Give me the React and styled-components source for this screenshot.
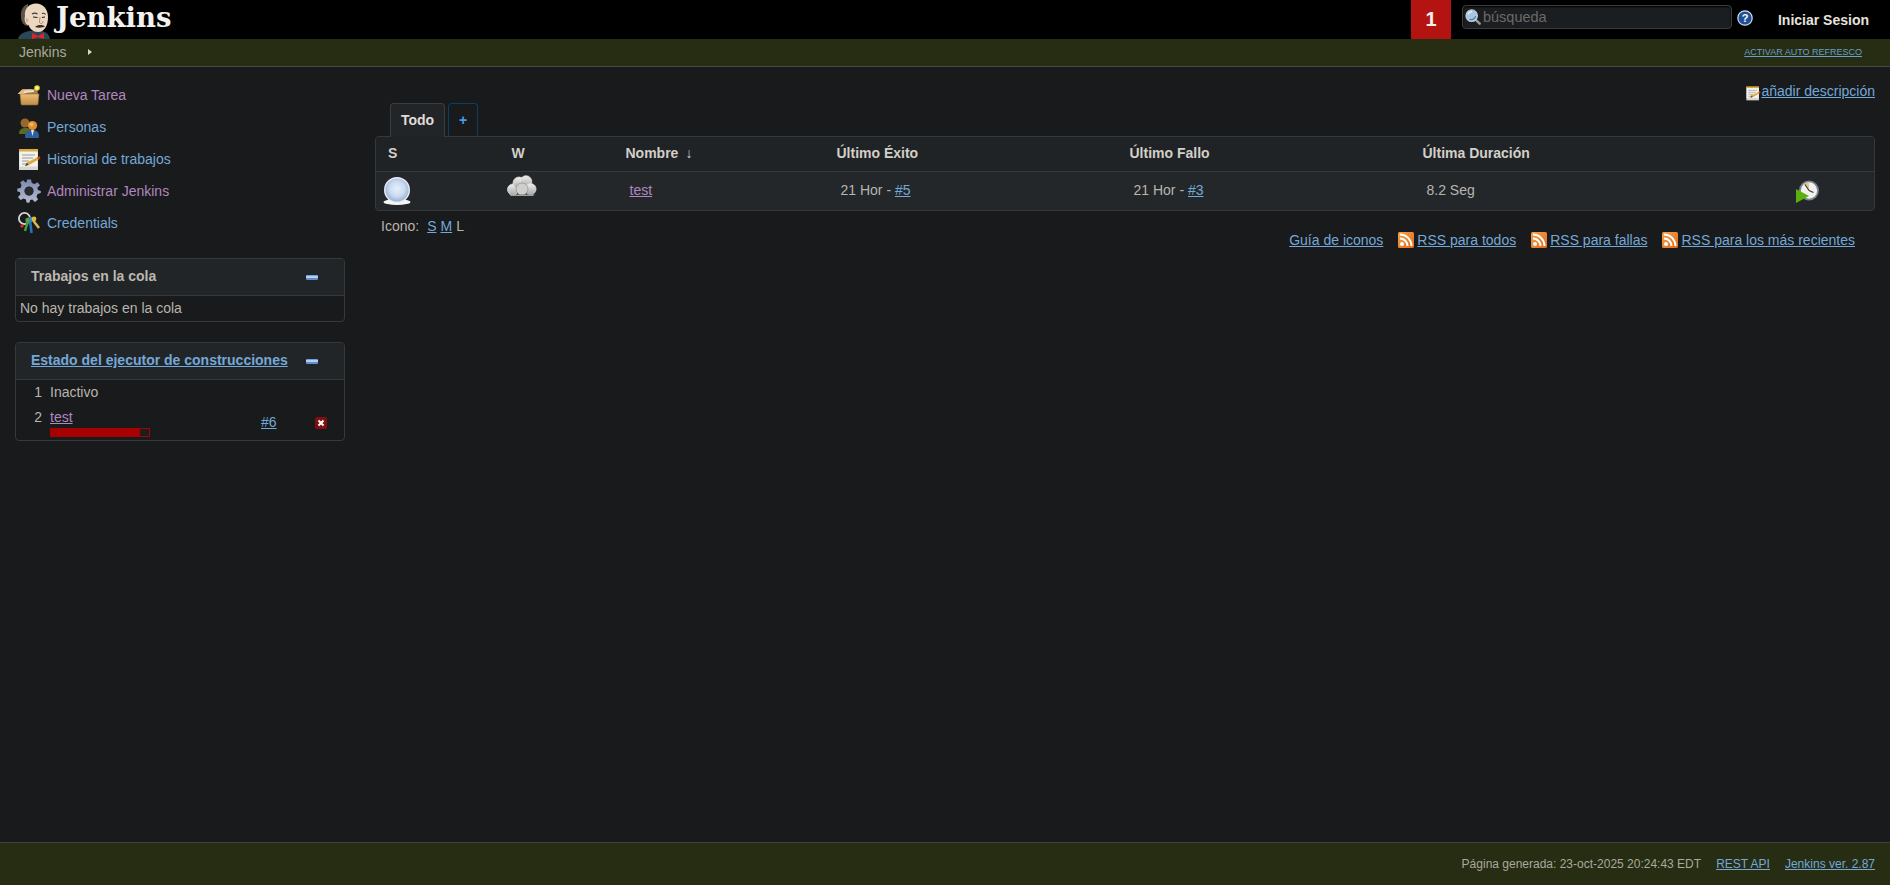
import React from "react";
import styled, { createGlobalStyle } from "styled-components";

const Global = createGlobalStyle`
  html, body { margin: 0; padding: 0; height: 100%; overflow: hidden; background: #181a1b; }
  body { font-family: "Liberation Sans", Arial, sans-serif; font-size: 14px; color: #b8b5ae; }
  #root { height: 100%; }
`;

const Page = styled.div`display: flex; flex-direction: column; height: 885px;`;
const A = styled.a`
  color: ${p => (p.$visited ? "#b088bf" : "#74a8d8")};
  text-decoration: underline;
  cursor: pointer;
`;
const Glyph = styled.svg`display: block; flex: none;`;

const TopBar = styled.header`display: flex; align-items: stretch; height: 39px; background: #000;`;
const Logo = styled.div`display: flex; align-items: flex-end; padding-left: 18px; flex: 1; overflow: hidden;`;
const LogoText = styled.span`
  font-family: "DejaVu Serif", serif; font-weight: 700; font-size: 27.5px; line-height: 34px;
  color: #f4f2ee; margin: 0 0 0 6px; align-self: flex-start;
`;
const Counter = styled.div`
  width: 40px; background: #b31412; color: #f2f0ec; font-weight: 700; font-size: 20px;
  display: flex; align-items: center; justify-content: center; margin-right: 11px;
`;
const SearchBox = styled.div`
  width: 270px; height: 24px; box-sizing: border-box; margin-top: 5px; display: flex; align-items: center; gap: 2px;
  padding-left: 2px; background: #1b1e20; border: 1px solid #3a3e41; border-radius: 4px;
  color: #6b6a66; font-size: 14.5px; box-shadow: inset 0 1px 2px #000;
`;
const Help = styled.div`margin: 10px 0 0 5px; height: 16px;`;
const Login = styled.div`
  font-weight: 700; font-size: 14px; color: #e6e3de; margin: 0 21px 0 25px; line-height: 41px;
`;

const Crumbs = styled.nav`
  height: 28px; box-sizing: border-box; display: flex; align-items: center; background: #262d13;
  border-bottom: 1px solid #45494c; padding: 0 28px 1px 19px; color: #aba89f;
`;
const Caret = styled.span`
  width: 0; height: 0; border-left: 4px solid #d8d5cf; border-top: 3.5px solid transparent;
  border-bottom: 3.5px solid transparent; margin-left: 22px;
`;
const AutoRefresh = styled(A)`
  margin-left: auto; font-size: 9px; text-transform: uppercase; color: #6a9fc9;
`;

const Body = styled.div`flex: 1; display: flex; min-height: 0;`;
const Side = styled.aside`width: 360px; flex: none; box-sizing: border-box; padding: 12px 15px 0;`;
const Tasks = styled.div`display: flex; flex-direction: column; margin-bottom: 19px;`;
const Task = styled.div`height: 32px; display: flex; align-items: center; gap: 7px; padding-left: 2px;`;
const TaskLink = styled(A)`text-decoration: none;`;
const IconBox = styled.span`width: 23px; height: 24px; display: inline-flex; align-items: center; justify-content: center; flex: none;`;

const Pane = styled.section`
  width: 330px; box-sizing: border-box; border: 1px solid #36393c; border-radius: 4px; margin-bottom: 20px; overflow: hidden;
`;
const PaneHead = styled.div`
  height: 37px; box-sizing: border-box; display: flex; align-items: center; background: #222527;
  border-bottom: 1px solid #36393c; padding: 0 26px 2px 15px; font-weight: 700; color: #bdb8b0;
  justify-content: space-between;
`;
const Collapse = styled.span`
  width: 12px; height: 5px; background: linear-gradient(#6ea0dc 0 25%, #b4cff0 25% 65%, #5f8fc8 65%); border-radius: 1px; margin-top: 2px;
`;
const PaneBody = styled.div`padding: 3px 4px 0; height: 22px; line-height: 18px;`;
const Exec = styled.div`
  display: grid; grid-template-columns: 26px 219px 54px 12px; padding-top: 3px; height: 57px;
  grid-auto-rows: min-content;
`;
const ExecNum = styled.div`text-align: right; line-height: 18px; padding-top: ${p => p.$top || 0}px;`;
const ExecCell = styled.div`padding: ${p => p.$top || 0}px 0 0 8px; line-height: 18px;`;
const Progress = styled.div`
  width: 100px; height: 9px; box-sizing: border-box; border: 1px solid #a80000; background: #1b1d1f; margin-top: 2px;
`;
const ProgressFill = styled.div`height: 100%; background: #a80000;`;
const RunRef = styled.div`padding-top: 12px; line-height: 18px;`;
const Stop = styled.div`padding-top: 16px;`;

const Main = styled.main`flex: 1; min-width: 0; padding: 15px 15px 0 15px; box-sizing: border-box;`;
const DescRow = styled.div`display: flex; justify-content: flex-end; align-items: flex-start; height: 21px; line-height: 18px;`;
const DescIcon = styled.span`padding-top: 3px;`;
const Tabs = styled.div`display: flex; gap: 3px; padding-left: 15px; height: 33px;`;
const Tab = styled.div`
  box-sizing: border-box; height: 34px; display: flex; align-items: center; justify-content: center;
  border-radius: 4px 4px 0 0; font-weight: 700; position: relative; padding-bottom: 1px;
  ${p => p.$active
    ? "width: 55px; background: #212528; border: 1px solid #3a3e41; border-bottom: none; color: #e0ddd8; z-index: 1;"
    : "width: 30px; border: 1px solid #0c3f66; border-bottom: none; color: #4a9be8;"}
`;
const Table = styled.div`
  border: 1px solid #36393c; border-radius: 4px; background: #23272a; overflow: hidden;
`;
const Row = styled.div`
  display: grid; grid-template-columns: 123.5px 114px 211px 293px 293px 1fr;
  height: ${p => (p.$head ? "34px" : "38px")}; align-items: center;
  ${p => p.$head && "background: #1f2326; border-bottom: 1px solid #36393c; box-sizing: content-box; height: 34px; font-weight: 700; color: #d3cfc9;"}
`;
const HeadCell = styled.div`padding-left: 12px; padding-bottom: 2px;`;
const DataCell = styled.div`padding: 0 55px 2px 16px; display: flex; align-items: center; justify-content: space-between;`;
const ClockWrap = styled.span`padding-top: 2px;`;
const IconCell = styled.div`padding: 0 0 ${p => p.$bottom || 0}px ${p => p.$pad || 7}px; display: flex;`;
const SortArrow = styled.span`font-weight: 400; margin-left: 7px; font-size: 14px;`;
const IconSize = styled.div`padding: 6px 0 0 6px; line-height: 18px; height: 14px;`;
const IconSizeLinks = styled.span`margin-left: 8px; display: inline-flex; gap: 4px;`;
const Legend = styled.div`display: flex; justify-content: flex-end; align-items: center; gap: 15px; padding: 0 20px 0 0; height: 18px;`;
const LegendItem = styled.span`display: inline-flex; align-items: center; gap: 3px;`;

const Footer = styled.footer`
  height: 43px; box-sizing: border-box; background: #262d13; border-top: 1px solid #3d4245;
  display: flex; justify-content: flex-end; align-items: center; gap: 15px; padding: 0 15px 0 0; font-size: 12px; color: #aba89f;
`;

const JenkinsHead = () => (
  <Glyph width="32" height="36" viewBox="0 0 32 36">
    <path d="M0 36 C1 31 6 29 11 28 L24 28 C28 29 31 31 32 36 Z" fill="#2b4657" />
    <path d="M14 30 L20 33 L26 30 L26 36 L20 34 L14 36 Z" fill="#e0262c" />
    <path d="M3 14 C2 7 6 2 10 1 L10 23 C6 23 3 19 3 14 Z" fill="#5c544b" />
    <path d="M7 13 C6 6 11 0.5 18 0.5 C25 0.5 30 6 30 14 C30 22 27 29 20 29 C15 29 12 26 10.5 22 C7 22 6 16 7 13 Z" fill="#ecd7c0" />
    <path d="M7.5 16 C8.5 15 10 15 10.5 17 C10.5 19 9 20.5 8.5 19.5 Z" fill="#d8b095" />
    <path d="M14 11 C16 9.8 18 10 19.5 11 M24 10.5 C25.5 10 27 10.5 27.5 11.5" stroke="#3a3a3a" strokeWidth="1.1" fill="none" />
    <path d="M15 14 L19.5 14.5 M24 14.5 L27 14" stroke="#222" strokeWidth="1.2" />
    <path d="M22 14 C22 17 20.5 20 22.5 20.5 C24.5 21 25 19 25 18" stroke="#b08a70" fill="none" />
    <path d="M17 24 C20 21.5 24 21.5 27 23.5 C25 24.8 20 25 17 24 Z" fill="#3a2f28" />
  </Glyph>
);

const BoxIcon = () => (
  <Glyph width="24" height="24" viewBox="0 0 24 24">
    <defs><linearGradient id="bx" x1="0" y1="0" x2="0" y2="1"><stop offset="0" stopColor="#f0bd70" /><stop offset="1" stopColor="#c08c48" /></linearGradient></defs>
    <path d="M1 11 L6 6 L20 6 L21 11 Z" fill="#a67e4c" />
    <path d="M3 11 L22 11 L21 21 Q21 22 20 22 L5 22 Q4 22 4 21 Z" fill="url(#bx)" stroke="#8c6a3c" strokeWidth=".6" />
    <path d="M0.5 11 L5 6.5 L16 6 L7 11 Z" fill="#e0ba80" />
    <path d="M7 9 L17 8" stroke="#e8e2d6" strokeWidth="2" />
    <circle cx="20" cy="5" r="2.8" fill="#e8dc34" />
    <circle cx="20" cy="5" r="1.3" fill="#fdfbc0" />
  </Glyph>
);
const PeopleIcon = () => (
  <Glyph width="24" height="24" viewBox="0 0 24 24">
    <path d="M2 19 C2 14 5 13 9 13 C13 13 14 15 14 19 Z" fill="#5a6a20" />
    <circle cx="8" cy="8" r="4.5" fill="#97682a" />
    <path d="M8 22 C8 16 11 15 15.5 15 C20 15 22 17 22 22 Q22 23 21 23 L9 23 Q8 23 8 22 Z" fill="#2f5f9e" />
    <path d="M14 15 L17 15 L15.5 21 Z" fill="#e2e6ee" />
    <circle cx="15.5" cy="10.5" r="4.6" fill="#dd9030" />
    <circle cx="14.5" cy="9.5" r="2" fill="#efb860" />
  </Glyph>
);
const NoteIcon = ({ size = 24 }) => (
  <Glyph width={size} height={size} viewBox="0 0 24 24">
    <path d="M2 3 L21 3 L21 23 L2 23 Z" fill="#d6d6d2" />
    <rect x="2.5" y="3.5" width="18" height="16" fill="#f2f2ee" />
    <rect x="2" y="2" width="19" height="2.5" fill="#d9a93f" />
    <path d="M5 8 L18 8 M5 11 L16 11 M5 14 L12 14 M5 17 L10 17" stroke="#9a9a96" strokeWidth="1" />
    <path d="M8 19 L10 15.5 L21 10 L22.5 12 L12 18 Z" fill="#e0a83c" />
    <path d="M20 10.5 L22.5 9 L23.5 11.5 L21.5 12.3 Z" fill="#c83a2a" />
    <path d="M8 19 L10 15.5 L11.5 18 Z" fill="#5a4632" />
  </Glyph>
);
const GearIcon = () => (
  <Glyph width="24" height="24" viewBox="0 0 24 24">
    <defs><linearGradient id="gr" x1="0" y1="0" x2="0" y2="1"><stop offset="0" stopColor="#7d88ad" /><stop offset="1" stopColor="#b6bdd2" /></linearGradient></defs>
    <path fill="url(#gr)" fillRule="evenodd" d="M10 0.5 L14 0.5 L14.8 4 L17.6 5.1 L20.6 3.2 L23 6.3 L20.4 8.7 L20.9 11 L23.8 12 L23.8 14 L20.6 15 L19.5 17.4 L21 20.4 L18 23 L15.3 20.5 L13.2 21 L12.3 23.8 L9.5 23.5 L9 20.5 L6.5 19.5 L3.6 21 L1 18 L3.4 15.5 L3 13.2 L0.2 12.2 L0.4 9.6 L3.5 9 L4.6 6.5 L3.2 3.6 L6 1.2 L8.7 3.5 L9.6 3.2 Z M12 7.5 A4.5 4.5 0 1 0 12.01 7.5 Z" />
    <circle cx="12" cy="12" r="4.3" fill="#2a2b2e" />
  </Glyph>
);
const KeysIcon = () => (
  <Glyph width="24" height="24" viewBox="0 0 24 24">
    <circle cx="7.5" cy="7.5" r="5.6" fill="none" stroke="#d8d8d8" strokeWidth="1.8" />
    <path d="M9 12 L12 7 L18 7" stroke="#d42020" strokeWidth="2" fill="none" />
    <path d="M13 9 L14.5 22" stroke="#2c6fbc" strokeWidth="2.6" />
    <path d="M11 10 L8 20" stroke="#3aa03a" strokeWidth="2.6" />
    <path d="M15 8 L22 17" stroke="#d8b84a" strokeWidth="2.6" />
    <circle cx="14" cy="8.5" r="2.6" fill="#3c80c8" />
    <circle cx="10.5" cy="9" r="2.2" fill="#42ab42" />
    <circle cx="17" cy="8" r="2.4" fill="#e0ba3c" />
    <circle cx="5" cy="15" r="1.8" fill="#c82a2a" />
  </Glyph>
);
const SearchIcon = () => (
  <Glyph width="16" height="16" viewBox="0 0 18 18">
    <path d="M11 11 L16.5 16.5" stroke="#999" strokeWidth="2.8" strokeLinecap="round" />
    <circle cx="7.5" cy="7.5" r="6.4" fill="#a8c6e4" stroke="#c8ccd0" strokeWidth="1.4" />
    <path d="M3.5 6 A4.5 4.5 0 0 1 8 3" stroke="#eef4fa" strokeWidth="1.4" fill="none" />
    <path d="M5 11.5 A5 5 0 0 0 12 8" stroke="#4c7fb8" strokeWidth="1.4" fill="none" />
  </Glyph>
);
const HelpIcon = () => (
  <Glyph width="16" height="16" viewBox="0 0 16 16">
    <circle cx="8" cy="8" r="7.2" fill="#1f4f94" stroke="#cfe0f2" strokeWidth="1.2" />
    <text x="8" y="12" textAnchor="middle" fontFamily="Liberation Sans" fontWeight="700" fontSize="11" fill="#fff">?</text>
  </Glyph>
);
const Ball = () => (
  <Glyph width="28" height="28" viewBox="0 0 28 28">
    <defs><radialGradient id="bl" cx="0.5" cy="0.45" r="0.55"><stop offset="0" stopColor="#e8f0fa" /><stop offset=".6" stopColor="#c8daf0" /><stop offset="1" stopColor="#97b2d6" /></radialGradient></defs>
    <ellipse cx="14" cy="25" rx="13.5" ry="3" fill="#f4f6f8" />
    <circle cx="14" cy="13" r="13" fill="#e9eef4" />
    <circle cx="14" cy="13" r="11.6" fill="url(#bl)" />
  </Glyph>
);
const Cloud = () => (
  <Glyph width="30" height="22" viewBox="0 0 30 22">
    <defs><linearGradient id="cl" x1="0" y1="0" x2="0" y2="1"><stop offset="0" stopColor="#f0f0ee" /><stop offset="1" stopColor="#a8a8a6" /></linearGradient></defs>
    <circle cx="6" cy="14.5" r="5.5" fill="url(#cl)" stroke="#e8e8e6" strokeWidth=".7" />
    <circle cx="12" cy="8" r="6" fill="url(#cl)" stroke="#e8e8e6" strokeWidth=".7" />
    <circle cx="19" cy="6.5" r="5.8" fill="url(#cl)" stroke="#e8e8e6" strokeWidth=".7" />
    <circle cx="23.5" cy="14" r="5.6" fill="url(#cl)" stroke="#d8d8d6" strokeWidth=".7" />
    <circle cx="15" cy="14" r="6" fill="#cfcfcd" stroke="#8f8f8d" strokeWidth=".7" />
    <path d="M2 19.5 L28 19.5 L26 21 L4 21 Z" fill="#a0a09e" />
  </Glyph>
);
const ClockRun = () => (
  <Glyph width="23" height="23" viewBox="0 0 23 23">
    <circle cx="13" cy="10.5" r="10" fill="#7d8090" />
    <circle cx="13" cy="10.5" r="8.2" fill="#f1f1ee" />
    <path d="M13 10.5 L13 2.5 A8 8 0 0 0 8 4 Z" fill="#e6c87a" />
    <path d="M13 10.5 L9 4.5 M13 10.5 L17.5 12.5" stroke="#333" strokeWidth="1.1" />
    <path d="M0 23 L0 9 L13 16 Z" fill="#5bb00e" />
  </Glyph>
);
const Rss = () => (
  <Glyph width="16" height="16" viewBox="0 0 16 16">
    <defs><linearGradient id="rs" x1="0" y1="0" x2="1" y2="1"><stop offset="0" stopColor="#f5a24a" /><stop offset="1" stopColor="#e06a1c" /></linearGradient></defs>
    <rect width="16" height="16" rx="1.5" fill="url(#rs)" />
    <circle cx="4" cy="12" r="2" fill="#fff" />
    <path d="M2 6.5 A7.5 7.5 0 0 1 9.5 14 M2 2.5 A11.5 11.5 0 0 1 13.5 14" stroke="#fff" strokeWidth="2" fill="none" />
  </Glyph>
);
const StopIcon = () => (
  <Glyph width="12" height="12" viewBox="0 0 12 12">
    <rect width="12" height="12" rx="2" fill="#7f0f12" />
    <path d="M3.5 3.5 L8.5 8.5 M8.5 3.5 L3.5 8.5" stroke="#fff" strokeWidth="2" />
  </Glyph>
);

const tasks = [
  { t: "Nueva Tarea", v: true, I: BoxIcon },
  { t: "Personas", I: PeopleIcon },
  { t: "Historial de trabajos", I: NoteIcon },
  { t: "Administrar Jenkins", v: true, I: GearIcon },
  { t: "Credentials", I: KeysIcon },
];

export default function App() {
  return (
    <Page>
      <Global />
      <TopBar>
        <Logo><JenkinsHead /><LogoText>Jenkins</LogoText></Logo>
        <Counter>1</Counter>
        <SearchBox><SearchIcon />búsqueda</SearchBox>
        <Help><HelpIcon /></Help>
        <Login>Iniciar Sesion</Login>
      </TopBar>
      <Crumbs>
        Jenkins<Caret />
        <AutoRefresh>Activar auto refresco</AutoRefresh>
      </Crumbs>
      <Body>
        <Side>
          <Tasks>
            {tasks.map(({ t, v, I }) => (
              <Task key={t}><IconBox><I /></IconBox><TaskLink $visited={v}>{t}</TaskLink></Task>
            ))}
          </Tasks>
          <Pane>
            <PaneHead>Trabajos en la cola<Collapse /></PaneHead>
            <PaneBody>No hay trabajos en la cola</PaneBody>
          </Pane>
          <Pane>
            <PaneHead><A>Estado del ejecutor de construcciones</A><Collapse /></PaneHead>
            <Exec>
              <ExecNum>1</ExecNum><ExecCell>Inactivo</ExecCell><div /><div />
              <ExecNum $top={7}>2</ExecNum>
              <ExecCell $top={7}>
                <A $visited>test</A>
                <Progress><ProgressFill style={{ width: "91%" }} /></Progress>
              </ExecCell>
              <RunRef><A>#6</A></RunRef>
              <Stop><StopIcon /></Stop>
            </Exec>
          </Pane>
        </Side>
        <Main>
          <DescRow><DescIcon><NoteIcon size={16} /></DescIcon><A>añadir descripción</A></DescRow>
          <Tabs><Tab $active>Todo</Tab><Tab>+</Tab></Tabs>
          <Table>
            <Row $head>
              <HeadCell>S</HeadCell><HeadCell>W</HeadCell>
              <HeadCell>Nombre<SortArrow>↓</SortArrow></HeadCell>
              <HeadCell>Último Éxito</HeadCell><HeadCell>Último Fallo</HeadCell><HeadCell>Última Duración</HeadCell>
            </Row>
            <Row>
              <IconCell><Ball /></IconCell>
              <IconCell $pad={7} $bottom={10}><Cloud /></IconCell>
              <DataCell><A $visited>test</A></DataCell>
              <DataCell><span>21 Hor - <A>#5</A></span></DataCell>
              <DataCell><span>21 Hor - <A>#3</A></span></DataCell>
              <DataCell><span>8.2 Seg</span><ClockWrap><ClockRun /></ClockWrap></DataCell>
            </Row>
          </Table>
          <IconSize>Icono:<IconSizeLinks><A>S</A><A>M</A><span>L</span></IconSizeLinks></IconSize>
          <Legend>
            <A>Guía de iconos</A>
            <LegendItem><Rss /><A>RSS para todos</A></LegendItem>
            <LegendItem><Rss /><A>RSS para fallas</A></LegendItem>
            <LegendItem><Rss /><A>RSS para los más recientes</A></LegendItem>
          </Legend>
        </Main>
      </Body>
      <Footer>
        <span>Página generada: 23-oct-2025 20:24:43 EDT</span>
        <A>REST API</A>
        <A>Jenkins ver. 2.87</A>
      </Footer>
    </Page>
  );
}
